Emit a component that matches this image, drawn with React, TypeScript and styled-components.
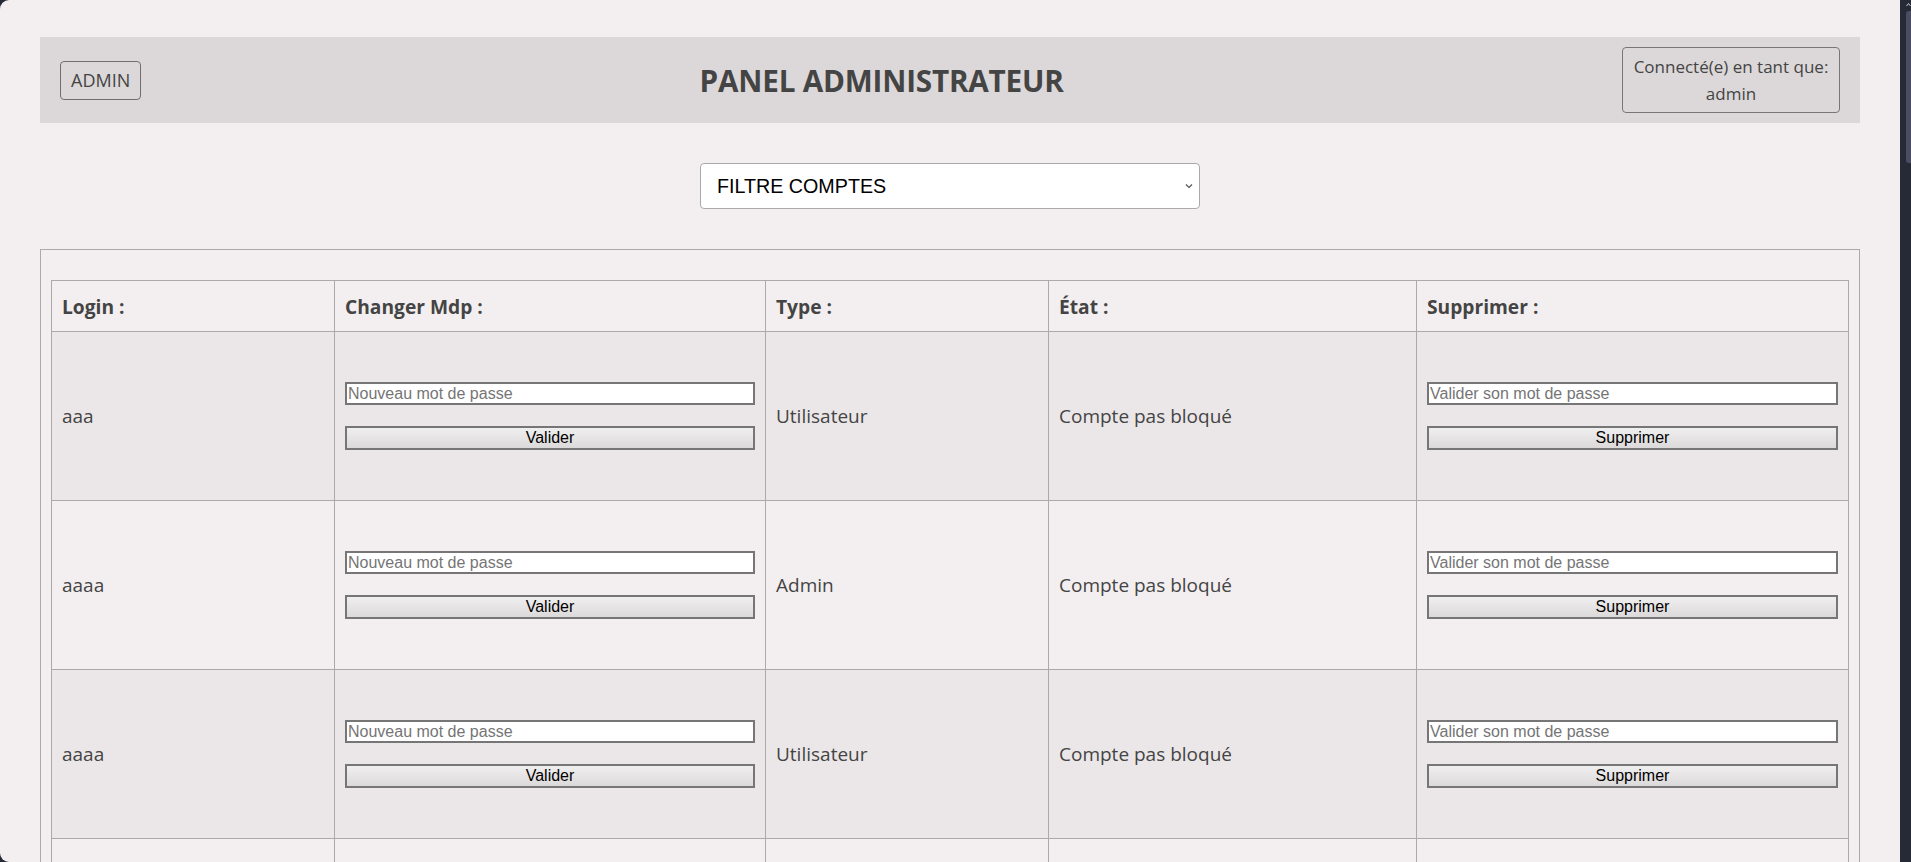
import React from "react";
import styled, { createGlobalStyle } from "styled-components";

const Global = createGlobalStyle`
  html, body { margin: 0; padding: 0; background: #262a36; }
  body { font-family: "Open Sans", "Noto Sans", sans-serif; }
  * { box-sizing: border-box; }
`;

const Shell = styled.div`
  display: flex;
  height: 100vh;
  overflow: hidden;
  background: #262a36;
`;

const Page = styled.main`
  flex: 1;
  min-width: 0;
  background: #f3eff0;
  border-radius: 9px 0 0 9px;
  padding: 37px 40px 0 40px;
  overflow: hidden;
  color: #444;
`;

const ScrollTrack = styled.div`
  width: 11px;
  flex: none;
  background: #262a36;
  display: flex;
  flex-direction: column;
  align-items: flex-end;
  padding-top: 2px;
`;

const ScrollThumb = styled.div`
  width: 5px;
  height: 152px;
  margin-top: 4px;
  background: #4a4c62;
  border-radius: 3px 0 0 3px;
`;

const HeaderBar = styled.header`
  display: flex;
  align-items: center;
  justify-content: space-between;
  background: #dcd8d9;
  padding: 10px 20px;
  min-height: 86px;
`;

const AdminButton = styled.button`
  font-family: "Open Sans", sans-serif;
  font-size: 18px;
  color: #444;
  background: transparent;
  border: 1px solid #6f6f6f;
  border-radius: 4px;
  height: 39px;
  padding: 0 10px;
`;

const Title = styled.h1`
  margin: 0;
  font-size: 29.7px;
  font-weight: 700;
  color: #444;
  letter-spacing: -0.2px;
`;

const UserBox = styled.div`
  border: 1px solid #777;
  border-radius: 4px;
  padding: 5px 10px;
  text-align: center;
  font-size: 17px;
  line-height: 27px;
  color: #444;
  width: 218px;
`;

const FilterRow = styled.div`
  display: flex;
  justify-content: center;
  margin: 40px 0 40px;
`;

const SelectWrap = styled.div`
  position: relative;
  width: 500px;
`;

const Select = styled.select`
  appearance: none;
  width: 100%;
  height: 46px;
  background: #fff;
  border: 1px solid #aaa;
  border-radius: 4px;
  padding: 0 16px;
  font-family: "Liberation Sans", Arial, sans-serif;
  font-size: 19.7px;
  color: #000;
`;

const Chevron = styled.svg`
  position: absolute;
  right: 7px;
  top: 20px;
  pointer-events: none;
`;

const TableBox = styled.section`
  border: 1px solid #aaa;
  padding: 30px 10px 10px;
`;

const Table = styled.table`
  width: 100%;
  border-collapse: collapse;
  table-layout: fixed;
`;

const HeadCell = styled.th<{ $w: number }>`
  width: ${(p) => p.$w}px;
  height: 51px;
  border: 1px solid #aaa;
  padding: 0 10px;
  text-align: left;
  font-size: 19.2px;
  font-weight: 700;
  color: #444;
`;

const Row = styled.tr<{ $dark: boolean }>`
  background: ${(p) => (p.$dark ? "#ebe7e8" : "#f3eff0")};
  height: 169px;
`;

const Cell = styled.td`
  border: 1px solid #aaa;
  padding: 0 10px;
  vertical-align: middle;
  font-size: 19px;
  color: #444;
`;

const FormStack = styled.div`
  display: flex;
  flex-direction: column;
  gap: 21px;
`;

const TextInput = styled.input`
  width: 100%;
  height: 23px;
  border: 2px solid #767676;
  background: #fff;
  padding: 0 1px;
  font-family: "Liberation Sans", Arial, sans-serif;
  font-size: 16px;
  color: #000;
  &::placeholder { color: #757575; }
`;

const ActionButton = styled.button`
  width: 100%;
  height: 24px;
  border: 2px solid #767676;
  background: linear-gradient(#f0efef, #dcd9da);
  font-family: "Liberation Sans", Arial, sans-serif;
  font-size: 16px;
  color: #000;
  padding: 0;
`;

const columns = [
  { label: "Login :", w: 283 },
  { label: "Changer Mdp :", w: 431 },
  { label: "Type :", w: 283 },
  { label: "État :", w: 368 },
  { label: "Supprimer :", w: 432 },
];

const accounts = [
  { login: "aaa", type: "Utilisateur", state: "Compte pas bloqué" },
  { login: "aaaa", type: "Admin", state: "Compte pas bloqué" },
  { login: "aaaa", type: "Utilisateur", state: "Compte pas bloqué" },
];

export default function App() {
  return (
    <Shell>
      <Global />
      <Page>
        <HeaderBar>
          <AdminButton>ADMIN</AdminButton>
          <Title>PANEL ADMINISTRATEUR</Title>
          <UserBox>
            Connecté(e) en tant que:
            <br />
            admin
          </UserBox>
        </HeaderBar>
        <FilterRow>
          <SelectWrap>
            <Select defaultValue="all">
              <option value="all">FILTRE COMPTES</option>
            </Select>
            <Chevron width="8" height="6" viewBox="0 0 8 6">
              <path d="M1 1.5 L4 4.5 L7 1.5" fill="none" stroke="#555" strokeWidth="1.2" />
            </Chevron>
          </SelectWrap>
        </FilterRow>
        <TableBox>
          <Table>
            <thead>
              <tr>
                {columns.map((c) => (
                  <HeadCell key={c.label} $w={c.w}>
                    {c.label}
                  </HeadCell>
                ))}
              </tr>
            </thead>
            <tbody>
              {accounts.map((a, i) => (
                <Row key={i} $dark={i % 2 === 0}>
                  <Cell>{a.login}</Cell>
                  <Cell>
                    <FormStack>
                      <TextInput type="password" placeholder="Nouveau mot de passe" />
                      <ActionButton>Valider</ActionButton>
                    </FormStack>
                  </Cell>
                  <Cell>{a.type}</Cell>
                  <Cell>{a.state}</Cell>
                  <Cell>
                    <FormStack>
                      <TextInput type="password" placeholder="Valider son mot de passe" />
                      <ActionButton>Supprimer</ActionButton>
                    </FormStack>
                  </Cell>
                </Row>
              ))}
              <Row $dark={false}>
                {columns.map((c) => (
                  <Cell key={c.label} />
                ))}
              </Row>
            </tbody>
          </Table>
        </TableBox>
      </Page>
      <ScrollTrack>
        <svg width="5" height="5" viewBox="0 0 5 5">
          <path d="M0.5 4 L2.5 1.5 L4.5 4" fill="none" stroke="#c8c8d0" strokeWidth="1" />
        </svg>
        <ScrollThumb />
      </ScrollTrack>
    </Shell>
  );
}
